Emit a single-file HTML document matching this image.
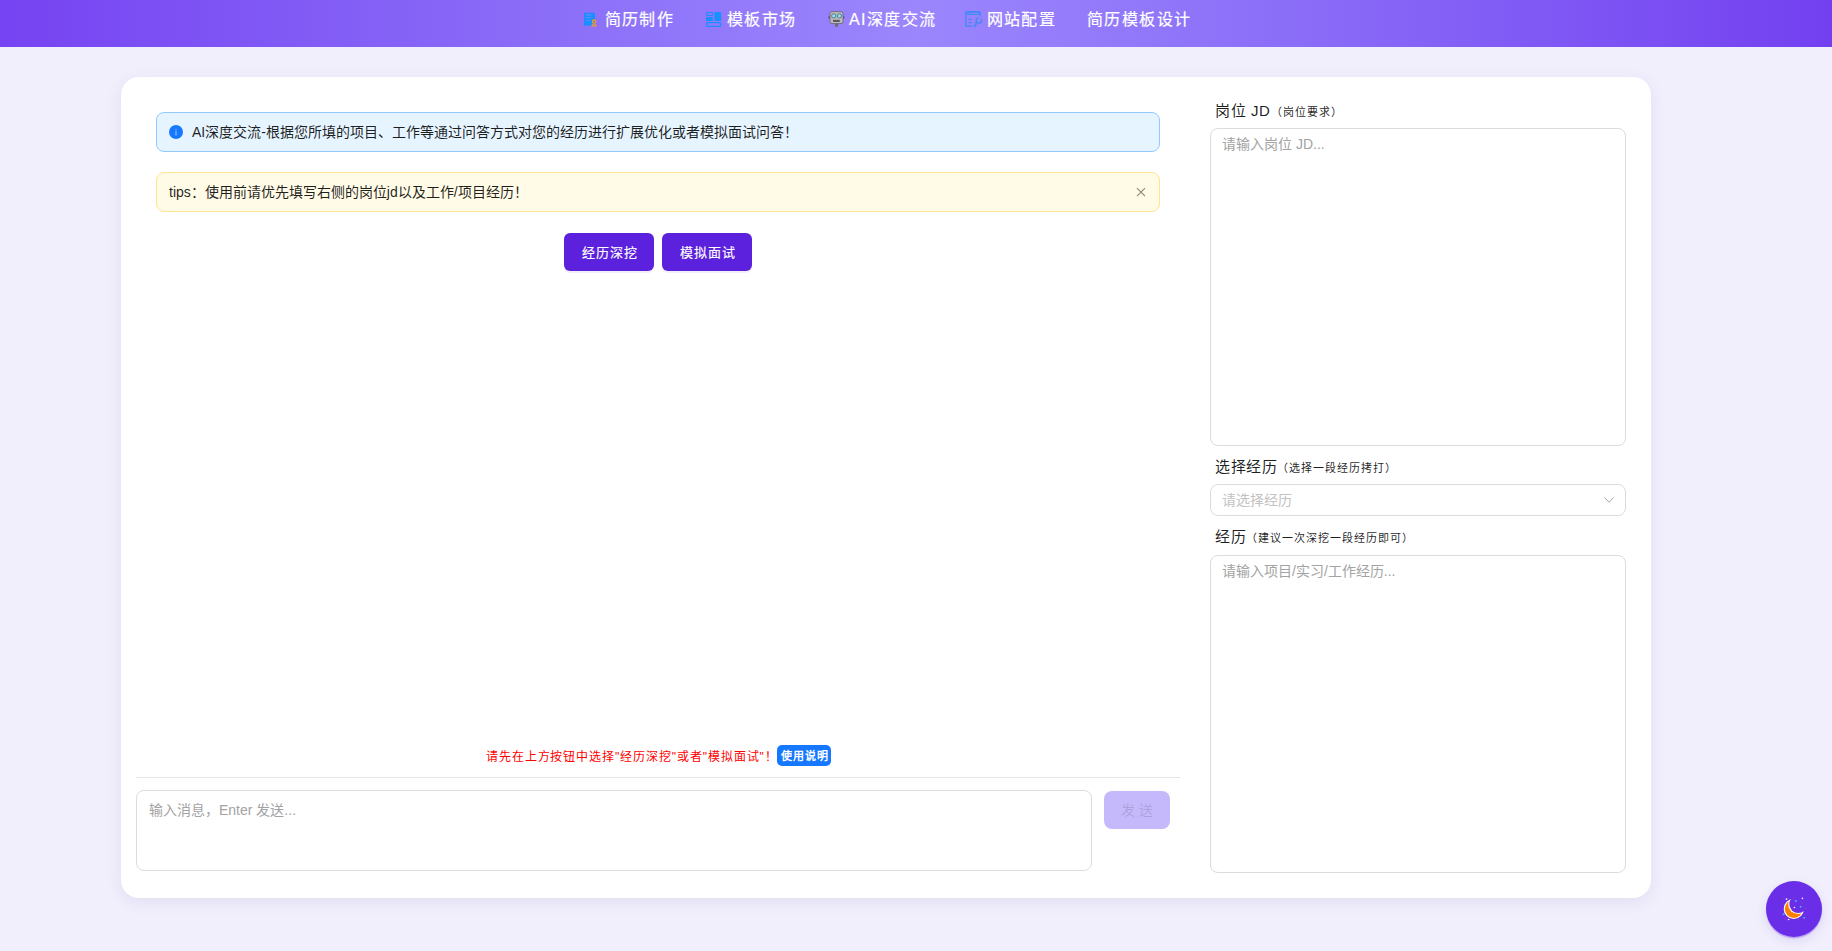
<!DOCTYPE html>
<html lang="zh-CN"><head><meta charset="utf-8">
<style>
*{box-sizing:border-box;margin:0;padding:0}
html,body{width:1832px;height:951px;overflow:hidden}
body{background:#f1effc;font-family:"Liberation Sans",sans-serif;font-size:14px;color:rgba(0,0,0,.88);position:relative}
.abs{position:absolute}
.hdr{left:0;top:0;width:1832px;height:47px;background:linear-gradient(90deg,#7643f2 0%,#8b6ef8 30%,#9b86fd 50%,#8b6ef8 70%,#7340f0 100%)}
.nav{color:#fff;font-size:16px;font-weight:400;-webkit-text-stroke:.2px #fff;letter-spacing:1.4px;white-space:nowrap;line-height:22px}
.card{left:121px;top:77px;width:1530px;height:821px;background:#fff;border-radius:18px;box-shadow:0 4px 16px rgba(70,60,140,.09)}
.alert{border-radius:8px;height:40px;line-height:22px;padding:8px 12px;white-space:nowrap}
.info{left:156px;top:112px;width:1004px;background:#e6f4ff;border:1px solid #91caff}
.warn{left:156px;top:172px;width:1004px;background:#fffbe6;border:1px solid #ffe58f}
.btn{height:38px;width:90px;border-radius:6px;background:#5b21dc;color:#fff;text-align:center;line-height:39px;font-size:13px;font-weight:400;-webkit-text-stroke:.15px #fff;letter-spacing:1px;padding-left:1px;box-shadow:0 2px 0 rgba(91,33,220,.08)}
.lbl{font-size:15px;letter-spacing:.6px;color:rgba(0,0,0,.88);white-space:nowrap;line-height:22px}
.lbl small{font-size:11px;letter-spacing:1px}
.ta{border:1px solid #dcdcdc;border-radius:8px;background:#fff}
.ph{color:#a3a3a3;font-size:14px;white-space:nowrap;line-height:22px}
</style></head><body>
<div class="abs hdr"></div>
<svg class="abs" style="left:0;top:0" width="1832" height="47" viewBox="0 0 1832 47">
<!-- icon1 resume -->
<rect x="584" y="12.8" width="11" height="13" rx="1" fill="#1890ff"/>
<rect x="586" y="14.3" width="5" height="1.3" fill="#6b86fb"/>
<rect x="586" y="17.1" width="5" height="1" fill="#6b86fb"/>
<rect x="586" y="20" width="3.5" height="1" fill="#6b86fb"/>
<circle cx="594" cy="21.6" r="1.6" fill="none" stroke="#f59a23" stroke-width="1.3"/>
<path d="M591.2 26.6 Q591.4 23.6 594 23.4 Q596.6 23.6 596.9 26.6 Z" fill="#f59a23"/>
<rect x="592.6" y="24.4" width="2.6" height="1" fill="#8f78f6"/>
<!-- icon2 template -->
<rect x="706.6" y="12.5" width="5.9" height="3" rx=".6" fill="none" stroke="#1890ff" stroke-width="1.2"/>
<rect x="706" y="17.1" width="7" height="3.8" rx=".5" fill="#1890ff"/>
<rect x="714.4" y="11.9" width="6.7" height="9" rx=".5" fill="#1890ff"/>
<rect x="706.6" y="22.6" width="13.9" height="3.7" rx=".6" fill="none" stroke="#1890ff" stroke-width="1.2"/>
<!-- icon3 robot -->
<rect x="829.3" y="23.4" width="0" height="0"/>
<rect x="828.4" y="16.6" width="1.8" height="1.6" fill="#4a4a5a"/>
<rect x="842.6" y="16.6" width="1.8" height="1.6" fill="#4a4a5a"/>
<rect x="835.2" y="23.2" width="2.8" height="3.6" fill="#6d6d63"/>
<rect x="830" y="11.6" width="13" height="12" rx="2" fill="#b9b9bb" stroke="#59596a" stroke-width=".7"/>
<circle cx="833.7" cy="15.9" r="2.1" fill="#86e3f7" stroke="#4f5566" stroke-width=".7"/>
<circle cx="839.4" cy="15.9" r="2.1" fill="#86e3f7" stroke="#4f5566" stroke-width=".7"/>
<rect x="833.1" y="19.9" width="6.6" height="2" fill="#4b4b4b"/><rect x="834.7" y="19.9" width=".4" height="2" fill="#8a8a8a"/><rect x="836.3" y="19.9" width=".4" height="2" fill="#8a8a8a"/><rect x="837.9" y="19.9" width=".4" height="2" fill="#8a8a8a"/>
<!-- icon4 config -->
<path d="M971.8 26.2 H966.8 Q965.8 26.2 965.8 25.2 V12.6 Q965.8 11.6 966.8 11.6 H979.2 Q980.2 11.6 980.2 12.6 V16.6" fill="none" stroke="#4a88f8" stroke-width="1.4"/>
<rect x="965.8" y="11.6" width="14.4" height="3.4" fill="#4a88f8"/>
<circle cx="967.9" cy="13.3" r=".55" fill="#9a8cf8"/>
<circle cx="969.6" cy="13.3" r=".55" fill="#9a8cf8"/>
<rect x="971.2" y="12.9" width="7.5" height=".8" fill="#8f8cf8"/>
<rect x="968.2" y="18.7" width="3.6" height="1.2" fill="#4a88f8"/>
<rect x="968.2" y="22" width="3.6" height="1.2" fill="#4a88f8"/>
<path d="M980.9 18.6 A2.7 2.7 0 1 1 978.6 17.7" fill="none" stroke="#4a88f8" stroke-width="1.5"/>
<path d="M976.6 22.6 L974.6 26.2" fill="none" stroke="#4a88f8" stroke-width="2.2" stroke-linecap="round"/>
</svg>
<!-- nav -->
<div class="abs nav" style="left:604.5px;top:9px">简历制作</div>
<div class="abs nav" style="left:727px;top:9px">模板市场</div>
<div class="abs nav" style="left:849px;top:9px">AI深度交流</div>
<div class="abs nav" style="left:986.5px;top:9px">网站配置</div>
<div class="abs nav" style="left:1087px;top:9px">简历模板设计</div>

<div class="abs card"></div>

<div class="abs alert info">
  <svg class="abs" style="left:12px;top:12px" width="14" height="14" viewBox="0 0 14 14"><circle cx="7" cy="7" r="7" fill="#1677ff"/><rect x="6.3" y="6.1" width="1.4" height="4.4" fill="#fff" fill-opacity=".45"/><rect x="6.3" y="4" width="1.4" height="1.2" fill="#fff" fill-opacity=".45"/></svg>
  <span class="abs" style="left:35px;top:8px">AI深度交流-根据您所填的项目、工作等通过问答方式对您的经历进行扩展优化或者模拟面试问答！</span>
</div>
<div class="abs alert warn">
  <span class="abs" style="left:12px;top:8px">tips：使用前请优先填写右侧的岗位jd以及工作/项目经历！</span>
  <svg class="abs" style="left:978px;top:13px" width="12" height="12" viewBox="0 0 12 12"><path d="M2 2.2L10 10.2M10 2.2L2 10.2" stroke="rgba(0,0,0,.45)" stroke-width="1.2"/></svg>
</div>

<div class="abs btn" style="left:564px;top:233px">经历深挖</div>
<div class="abs btn" style="left:662px;top:233px">模拟面试</div>

<!-- hint -->
<div class="abs" style="left:486px;top:748px;color:#ff0000;font-size:12px;line-height:18px;white-space:nowrap;letter-spacing:.9px">请先在上方按钮中选择"经历深挖"或者"模拟面试"！</div>
<div class="abs" style="left:777px;top:745px;width:54px;height:21px;background:#1677ff;color:#fff;font-size:11px;line-height:23px;text-align:center;border-radius:5px;font-weight:600;letter-spacing:1px;padding-left:1px">使用说明</div>
<div class="abs" style="left:136px;top:777px;width:1044px;height:1px;background:#e5e5e5"></div>
<div class="abs ta" style="left:136px;top:790px;width:956px;height:81px"></div>
<div class="abs ph" style="left:149px;top:799px">输入消息，Enter 发送...</div>
<div class="abs" style="left:1104px;top:791px;width:66px;height:38px;border-radius:8px;background:#c5b8fb;color:rgba(0,0,0,.13);text-align:center;line-height:38px;letter-spacing:4px;padding-left:4px">发送</div>

<!-- right col -->
<div class="abs lbl" style="left:1215px;top:100px">岗位 JD<small>（岗位要求）</small></div>
<div class="abs ta" style="left:1210px;top:128px;width:416px;height:318px"></div>
<div class="abs ph" style="left:1222px;top:133px">请输入岗位 JD...</div>

<div class="abs lbl" style="left:1215px;top:456px">选择经历<small>（选择一段经历拷打）</small></div>
<div class="abs ta" style="left:1210px;top:484px;width:416px;height:32px"></div>
<div class="abs ph" style="left:1222px;top:489px;color:#c2c2c2">请选择经历</div>
<svg class="abs" style="left:1603px;top:494px" width="12" height="12" viewBox="0 0 12 12"><path d="M1.5 3.5L6 8.2L10.5 3.5" fill="none" stroke="rgba(0,0,0,.35)" stroke-width="1"/></svg>

<div class="abs lbl" style="left:1215px;top:526px">经历<small>（建议一次深挖一段经历即可）</small></div>
<div class="abs ta" style="left:1210px;top:555px;width:416px;height:318px"></div>
<div class="abs ph" style="left:1222px;top:560px">请输入项目/实习/工作经历...</div>

<!-- float btn -->
<div class="abs" style="left:1766px;top:881px;width:56px;height:56px;border-radius:50%;background:#6a2ee8;box-shadow:0 1.5px 1px rgba(106,46,232,.35),0 4px 12px rgba(80,40,200,.12)"></div>
<svg class="abs" style="left:1766px;top:881px" width="57" height="57" viewBox="1766 881 57 57">
<defs><mask id="mk1" maskUnits="userSpaceOnUse" x="1766" y="881" width="57" height="57"><rect x="1766" y="881" width="57" height="57" fill="#fff"/><circle cx="1798.2" cy="904.1" r="8.9" fill="#000"/></mask>
<mask id="mk2" maskUnits="userSpaceOnUse" x="1766" y="881" width="57" height="57"><rect x="1766" y="881" width="57" height="57" fill="#fff"/><circle cx="1798.2" cy="904.1" r="10" fill="#000"/></mask></defs>
<circle cx="1793.8" cy="908.9" r="10.1" fill="#fff" mask="url(#mk1)"/>
<circle cx="1793.8" cy="908.9" r="9" fill="#ff8000" mask="url(#mk2)"/>
<g fill="#fff">
<path d="M1786.5 897.8 L1787 898.7 L1787.9 899 L1787 899.4 L1786.5 900.3 L1786.1 899.4 L1785.2 899 L1786.1 898.7 Z"/>
<path d="M1802.3 897 L1802.8 897.9 L1803.7 898.2 L1802.8 898.6 L1802.3 899.5 L1801.9 898.6 L1801 898.2 L1801.9 897.9 Z"/>
<circle cx="1794.4" cy="907.5" r=".8"/>
<circle cx="1788.6" cy="919.5" r=".8"/>
</g>
<g fill="#45b3e3">
<circle cx="1795.9" cy="901.1" r="1"/>
<circle cx="1800.6" cy="906.8" r="1"/>
<circle cx="1783.5" cy="914.3" r="1"/>
<circle cx="1804.2" cy="917.7" r="1"/>
</g>
<g fill="#e0603a">
<circle cx="1782.4" cy="899.4" r=".45"/><circle cx="1793.5" cy="897.7" r=".45"/><circle cx="1802.1" cy="903" r=".45"/>
<circle cx="1805.4" cy="908.5" r=".45"/><circle cx="1785" cy="918.7" r=".45"/><circle cx="1798.6" cy="919.4" r=".45"/><circle cx="1783.8" cy="904" r=".45"/>
</g>
</svg>
</body></html>
